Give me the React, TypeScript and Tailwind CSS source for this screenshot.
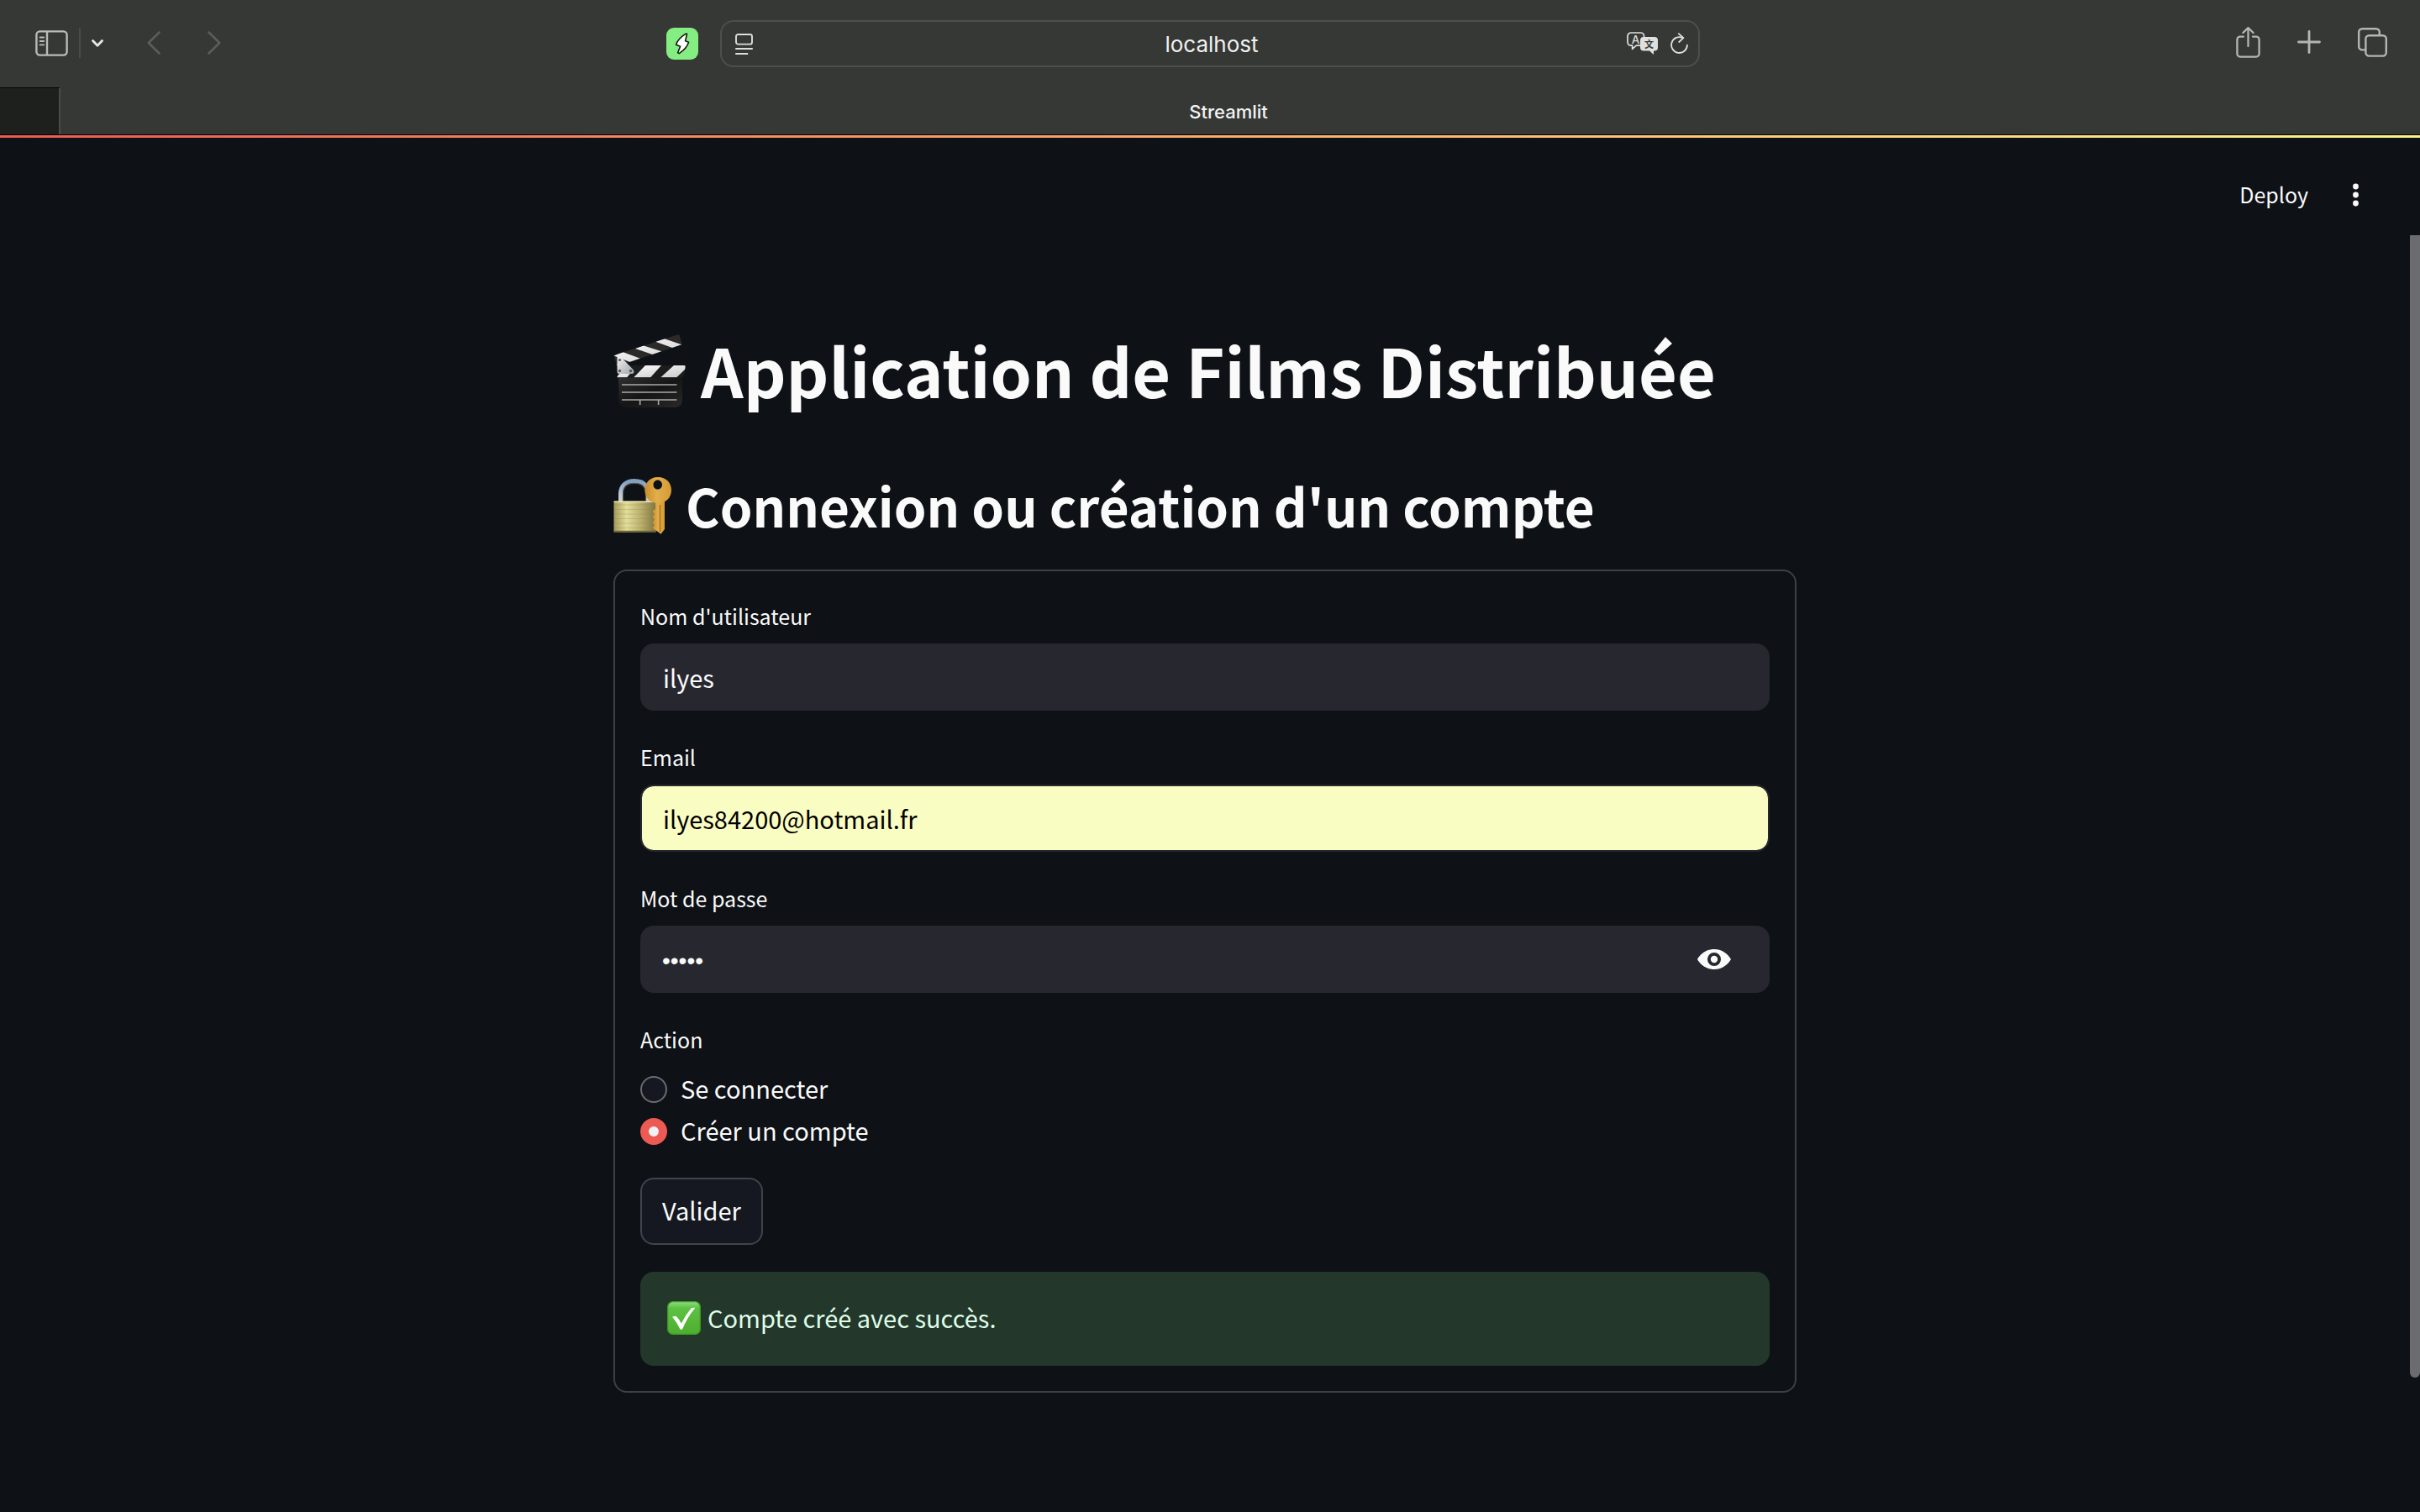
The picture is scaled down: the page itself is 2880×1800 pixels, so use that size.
import { useState } from "react";
import type { ReactNode } from "react";

const inputClass =
  "h-20 w-full rounded-2xl border-2 px-[25px] text-[29px] outline-none";

function IconButton({ label, className, children }: { label: string; className?: string; children: ReactNode }) {
  return (
    <button type="button" aria-label={label} className={`flex shrink-0 items-center justify-center ${className ?? ""}`}>
      {children}
    </button>
  );
}

function SidebarIcon() {
  return (
    <svg width="39" height="31" viewBox="0 0 39 31" fill="none" stroke="#b9bbb9" strokeWidth="2.4">
      <rect x="1.4" y="1.4" width="36.2" height="28.2" rx="4" />
      <path d="M14 1.5v28" />
      <path d="M5.6 8.5h4.6M5.6 13h4.6M5.6 17.4h4.6" strokeWidth="1.8" strokeLinecap="round" />
    </svg>
  );
}

function BoltBadge() {
  return (
    <svg width="38" height="38" viewBox="0 0 38 38">
      <rect width="38" height="38" rx="9" fill="#84ee82" />
      <path
        d="M24.6 7.4 22.6 15.8 26.6 17.2Q24 25 15.2 30.6L13.6 29.8 16.6 22.2 11.6 20.2Q13.6 13.4 22.8 7.4Z"
        fill="#fff"
        stroke="#14180f"
        strokeWidth="1.6"
        strokeLinejoin="round"
      />
    </svg>
  );
}

function ReaderIcon() {
  return (
    <svg width="21" height="25" viewBox="0 0 21 25" fill="none" stroke="#dcdedc" strokeWidth="1.9">
      <rect x="1" y="1" width="19" height="11.6" rx="2.4" />
      <path d="M.2 18h20.6M.2 24h15" />
    </svg>
  );
}

function TranslateIcon() {
  return (
    <svg width="38" height="28" viewBox="0 0 38 28">
      <path
        d="M16 16.2H11.4L6.6 20.4V16.2H5A4 4 0 0 1 1 12.2V5A4 4 0 0 1 5 1H16.5A4 4 0 0 1 20.5 5V6"
        fill="none"
        stroke="#dedfde"
        strokeWidth="1.7"
        strokeLinejoin="round"
      />
      <text x="10.6" y="13.6" textAnchor="middle" fontSize="13.5" fontWeight="500" fontFamily="Inter, sans-serif" fill="#dedfde">
        A
      </text>
      <path d="M20 6H33A4 4 0 0 1 37 10V18.6A4 4 0 0 1 33 22.6H32V27L27 22.6H20A4 4 0 0 1 16 18.6V10A4 4 0 0 1 20 6Z" fill="#dedfde" />
      <text x="26.5" y="18.6" textAnchor="middle" fontSize="11" fontWeight="700" fontFamily="Noto Sans CJK SC, sans-serif" fill="#363836">
        文
      </text>
    </svg>
  );
}

function ReloadIcon() {
  return (
    <svg width="21" height="26" viewBox="0 0 21 26" fill="none" stroke="#dedfde" strokeWidth="1.8" strokeLinecap="round" strokeLinejoin="round">
      <path d="M19.9 14.6A9.4 9.4 0 1 1 14.6 6.1" />
      <path d="M9.8 1.2 15.4 6.2 10.2 11" />
    </svg>
  );
}

function ShareIcon() {
  return (
    <svg width="29" height="37" viewBox="0 0 29 37" fill="none" stroke="#b4b6b4" strokeWidth="2.3" strokeLinecap="round" strokeLinejoin="round">
      <path d="M9 11.6H5A3.6 3.6 0 0 0 1.4 15.2V32A3.6 3.6 0 0 0 5 35.6H24A3.6 3.6 0 0 0 27.6 32V15.2A3.6 3.6 0 0 0 24 11.6H20" />
      <path d="M14.5 23V1.6M8.4 7 14.5 1.2 20.6 7" />
    </svg>
  );
}

function PlusIcon() {
  return (
    <svg width="28" height="28" viewBox="0 0 28 28" fill="none" stroke="#b4b6b4" strokeWidth="2.8" strokeLinecap="round">
      <path d="M14 1.5V26.5M1.5 14H26.5" />
    </svg>
  );
}

function TabsIcon() {
  return (
    <svg width="35" height="35" viewBox="0 0 35 35" fill="none" stroke="#b4b6b4" strokeWidth="2.4">
      <rect x="9.4" y="9.2" width="24.4" height="24.4" rx="4" />
      <path d="M9 26.4H5.2A4 4 0 0 1 1.2 22.4V5.2A4 4 0 0 1 5.2 1.2H21.8A4 4 0 0 1 25.8 5.2V9" />
    </svg>
  );
}

function ClapperEmoji() {
  return (
    <svg role="img" aria-label="Clap de cinéma" className="mt-1 shrink-0" width="86" height="88" viewBox="0 0 86 88">
      <defs>
        <linearGradient id="clapBody" x1="0" y1="0" x2="1" y2="1">
          <stop offset="0" stopColor="#2f2f2f" />
          <stop offset=".5" stopColor="#151515" />
          <stop offset="1" stopColor="#2b2928" />
        </linearGradient>
        <linearGradient id="clapStripe" x1="0" y1="0" x2="1" y2="1">
          <stop offset="0" stopColor="#fff" />
          <stop offset="1" stopColor="#c9c9c9" />
        </linearGradient>
        <linearGradient id="clapHinge" x1="0" y1="0" x2="1" y2="1">
          <stop offset="0" stopColor="#f2f3f4" />
          <stop offset="1" stopColor="#9fa3a6" />
        </linearGradient>
        <clipPath id="clapArm">
          <path d="M.5 25 76 .4Q78.500 0 79 2L81.700 12 13 35 4 37Z" />
        </clipPath>
        <clipPath id="clapBar">
          <path d="M5 37H84Q86 37 85.600 39L84 50 82 51.600H4.600Z" />
        </clipPath>
      </defs>
      <g clipPath="url(#clapArm)">
        <rect width="86" height="40" fill="#2b2a29" />
        <path d="M50 8.800 60 5 82 12.500 73 17ZM26 17 36 13.400 58 20.500 48 24.500ZM.5 25.500 11 21 32 28.800 21 33.500ZM0 34 6 37 0 38Z" fill="url(#clapStripe)" />
      </g>
      <g clipPath="url(#clapBar)">
        <rect y="36" width="86" height="16" fill="#1d1c1c" />
        <path d="M38 37H57L44 51.600H24ZM72 37H90L75 51.600H56ZM10 44H22L16 51.600H3Z" fill="url(#clapStripe)" />
      </g>
      <path d="M6 51.600H82V78Q82 87 72 87H16Q6.500 87 6.500 78Z" fill="url(#clapBody)" />
      <path d="M10 60H75.500M10 69H75.500M10 78H75.500M31.700 78V84M53.600 78V84" stroke="#a9a9a9" strokeWidth="1.600" fill="none" />
      <path d="M4.500 27.500Q7 25.500 10 28L23.500 42Q26 46 22.500 47H7Q4.500 47 4.500 44Z" fill="url(#clapHinge)" />
      <g fill="#55585a">
        <circle cx="7.500" cy="30.500" r="1.600" />
        <circle cx="7.500" cy="43.500" r="1.700" />
        <circle cx="20.600" cy="43.500" r="1.700" />
      </g>
    </svg>
  );
}

function LockEmoji() {
  return (
    <svg role="img" aria-label="Cadenas avec clé" className="mt-1 shrink-0" width="70" height="70" viewBox="0 0 70 70">
      <defs>
        <linearGradient id="lockBody" x1="0" x2="1">
          <stop offset="0" stopColor="#a39a5b" />
          <stop offset=".3" stopColor="#e3dd9b" />
          <stop offset=".65" stopColor="#b9ae6c" />
          <stop offset="1" stopColor="#7d733f" />
        </linearGradient>
        <linearGradient id="lockShackle" x1="0" y1="0" x2="0" y2="1">
          <stop offset="0" stopColor="#7f9fc4" />
          <stop offset=".6" stopColor="#b8c8d8" />
          <stop offset="1" stopColor="#cfd2d4" />
        </linearGradient>
        <linearGradient id="lockKey" x1="0" x2="1">
          <stop offset="0" stopColor="#c98f2c" />
          <stop offset=".45" stopColor="#e3ae4c" />
          <stop offset="1" stopColor="#d59a33" />
        </linearGradient>
      </defs>
      <path d="M8.500 30V20C8.500 9 16 4.400 25 4.400S41.500 9 41.500 20V30" fill="none" stroke="url(#lockShackle)" strokeWidth="5" />
      <path d="M11.500 30V20C11.500 11.500 17 7.400 25 7.400S38.500 11.500 38.500 20V30" fill="none" stroke="#5d5642" strokeWidth="1.200" />
      <rect x=".5" y="28.500" width="50.500" height="37" rx="1" fill="url(#lockBody)" />
      <path d="M1 33H50M1 38.500H50M1 44H50M1 49.500H50M1 55H50M1 60.500H50" stroke="#8f8548" strokeOpacity=".3" strokeWidth="1" />
      <path d="M.5 29.300H51" stroke="#f4efbe" strokeWidth="1.200" />
      <path d="M.5 64.600H51" stroke="#6f6636" strokeWidth="1.800" />
      <path d="M50 28H61V62L56.500 67.800 51.500 64 50 63 46.500 60.500 49 57 46.500 54 49 50.500 46.500 47.500 49 44 46.500 41 50 38Z" fill="url(#lockKey)" />
      <path d="M55.500 33V65" stroke="#a06f1d" strokeWidth="1.300" />
      <path
        fillRule="evenodd"
        d="M53 0C63 0 69 7 69 15.500S63 31 53 31 37.500 24 37.500 15.500 43 0 53 0ZM52.700 3.400C49.600 3.400 47.500 6 47.500 9S49.600 14.600 52.700 14.600 58 12 58 9 55.800 3.400 52.700 3.400Z"
        fill="url(#lockKey)"
      />
    </svg>
  );
}

function CheckEmoji() {
  return (
    <svg role="img" aria-label="Succès" className="shrink-0" width="40" height="40" viewBox="0 0 40 40">
      <defs>
        <linearGradient id="checkFill" x1="0" y1="0" x2="0" y2="1">
          <stop offset="0" stopColor="#8fdc7c" />
          <stop offset=".2" stopColor="#5cc243" />
          <stop offset="1" stopColor="#4ead2f" />
        </linearGradient>
      </defs>
      <rect x=".7" y=".7" width="38.600" height="38.600" rx="6" fill="url(#checkFill)" stroke="#3f9a27" strokeWidth="1.300" />
      <path d="M6 18.500 10.500 17.800Q14 21 16.800 26.500 22 16 29 8L33.500 7.800Q24 19 18 33.600L15.600 33.800Q11.500 25 6 18.500Z" fill="#fff" />
    </svg>
  );
}

function EyeIcon() {
  return (
    <svg width="40" height="24" viewBox="0 0 40 24">
      <path
        fillRule="evenodd"
        d="M20 0C30 0 37 6.500 40 12 37 17.500 30 24 20 24S3 17.500 0 12C3 6.500 10 0 20 0ZM20 4A8 8 0 1 0 20 20 8 8 0 0 0 20 4Z"
        fill="#fafafa"
      />
      <circle cx="20" cy="12" r="4.200" fill="#fafafa" />
    </svg>
  );
}

function BrowserToolbar() {
  return (
    <div className="grid h-[104px] grid-cols-[1fr_minmax(0,1166px)_1fr] items-center">
      <div className="flex items-center justify-between pr-[26px] pl-[42px]">
        <div className="flex items-center pb-[2px]">
          <IconButton label="Afficher la barre latérale">
            <SidebarIcon />
          </IconButton>
          <div className="mx-[13px] h-9 w-[2px] bg-[#494b49]" />
          <IconButton label="Groupes d’onglets">
            <svg width="14" height="9" viewBox="0 0 14 9" fill="none" stroke="#e6e7e6" strokeWidth="2.800" strokeLinecap="round" strokeLinejoin="round">
              <path d="M1.500 1.500 7 7.300 12.500 1.500" />
            </svg>
          </IconButton>
          <IconButton label="Page précédente" className="ml-[52px]">
            <svg width="16" height="28" viewBox="0 0 16 28" fill="none" stroke="#5b5d5b" strokeWidth="2.600" strokeLinecap="round" strokeLinejoin="round">
              <path d="M14.500 1.500 1.800 14 14.500 26.500" />
            </svg>
          </IconButton>
          <IconButton label="Page suivante" className="ml-14">
            <svg width="16" height="28" viewBox="0 0 16 28" fill="none" stroke="#5b5d5b" strokeWidth="2.600" strokeLinecap="round" strokeLinejoin="round">
              <path d="M1.500 1.500 14.200 14 1.500 26.500" />
            </svg>
          </IconButton>
        </div>
        <IconButton label="Extension">
          <BoltBadge />
        </IconButton>
      </div>
      <div className="flex h-14 items-center rounded-2xl border-2 border-[#4d4f4d] pr-3 pl-4">
        <div className="flex w-20 items-center">
          <IconButton label="Lecteur">
            <ReaderIcon />
          </IconButton>
        </div>
        <input
          aria-label="Adresse"
          defaultValue="localhost"
          className="min-w-0 flex-1 bg-transparent text-center font-['Inter',sans-serif] text-[26px] text-[#f0f1f0] outline-none"
        />
        <div className="flex w-20 items-center justify-end gap-[14px]">
          <IconButton label="Traduire">
            <TranslateIcon />
          </IconButton>
          <IconButton label="Recharger">
            <ReloadIcon />
          </IconButton>
        </div>
      </div>
      <div className="flex items-center justify-end gap-11 pr-[39px] pb-1">
        <IconButton label="Partager">
          <ShareIcon />
        </IconButton>
        <IconButton label="Nouvel onglet">
          <PlusIcon />
        </IconButton>
        <IconButton label="Vue des onglets">
          <TabsIcon />
        </IconButton>
      </div>
    </div>
  );
}

function Field({ id, label, children }: { id: string; label: string; children: ReactNode }) {
  return (
    <div className="mb-8">
      <label htmlFor={id} className="mb-[10px] block w-fit text-[25px] leading-[46px]">
        {label}
      </label>
      {children}
    </div>
  );
}

export default function App() {
  const [action, setAction] = useState("Créer un compte");
  const [visible, setVisible] = useState(false);

  return (
    <div className="flex min-h-screen flex-col bg-[#0e1116] font-['Noto_Sans_CJK_SC',sans-serif] text-[#fafafa]">
      <header className="bg-[#363836]">
        <BrowserToolbar />
        <div className="flex h-14 font-['Inter',sans-serif]">
          <div className="w-[72px] border-t border-r-2 border-t-black border-r-[#4a4c4a] bg-[#1e201e]" />
          <div className="flex flex-1 items-center justify-center pt-[2px] pr-7 text-[22px] font-medium text-[#f2f3f2]">Streamlit</div>
        </div>
        <div className="h-1 border-t border-black bg-linear-to-r from-[#ec5a53] to-[#fcf58a]" />
      </header>

      <div className="flex h-[116px] items-center justify-end gap-[53px] pt-5 pr-[73px]">
        <button type="button" className="pb-[2px] text-[25px] leading-10">
          Deploy
        </button>
        <IconButton label="Menu principal">
          <svg width="7" height="28" viewBox="0 0 7 28" fill="#fafafa">
            <circle cx="3.500" cy="4" r="3.400" />
            <circle cx="3.500" cy="14" r="3.400" />
            <circle cx="3.500" cy="24" r="3.400" />
          </svg>
        </IconButton>
      </div>

      <div className="flex flex-1">
        <main className="flex-1 pt-[107px]">
          <div className="mx-auto w-full max-w-[1408px]">
            <h1 className="mb-16 flex items-center gap-[18px] text-[79px] leading-[106px] font-bold">
              <ClapperEmoji />
              Application de Films Distribuée
            </h1>
            <h2 className="mb-[33px] flex items-center gap-4 text-[62px] leading-[88px] font-semibold">
              <LockEmoji />
              Connexion ou création d'un compte
            </h2>
            <form className="rounded-2xl border-2 border-[#3d4045] p-[30px]" onSubmit={(e) => e.preventDefault()}>
              <Field id="username" label="Nom d'utilisateur">
                <input id="username" type="text" defaultValue="ilyes" className={`${inputClass} border-[#272730] bg-[#272730]`} />
              </Field>
              <Field id="email" label="Email">
                <input
                  id="email"
                  type="email"
                  defaultValue="ilyes84200@hotmail.fr"
                  className={`${inputClass} border-[#272730] bg-[#fafdc2] bg-clip-padding text-black`}
                />
              </Field>
              <Field id="password" label="Mot de passe">
                <div className="flex h-20 items-center rounded-2xl bg-[#272730] pr-[46px] pl-[26px]">
                  <input
                    id="password"
                    type={visible ? "text" : "password"}
                    defaultValue="ilyes"
                    className={
                      visible
                        ? "h-full min-w-0 flex-1 bg-transparent text-[29px] outline-none"
                        : "h-full min-w-0 flex-1 bg-transparent pt-1 font-['Liberation_Sans',sans-serif] text-[28px] outline-none"
                    }
                  />
                  <button type="button" aria-label="Afficher le mot de passe" onClick={() => setVisible(!visible)}>
                    <EyeIcon />
                  </button>
                </div>
              </Field>
              <fieldset className="mb-8">
                <legend className="mb-[10px] text-[25px] leading-[46px]">Action</legend>
                {["Se connecter", "Créer un compte"].map((option) => (
                  <label key={option} className="flex w-fit items-center gap-4 text-[29px] leading-[50px]">
                    <input
                      type="radio"
                      name="action"
                      checked={action === option}
                      onChange={() => setAction(option)}
                      className="mt-1 size-8 appearance-none rounded-full border-2 border-[#6a6c70] bg-[#151821] checked:border-[10px] checked:border-[#ec5a53] checked:bg-[#f0f2f6]"
                    />
                    {option}
                  </label>
                ))}
              </fieldset>
              <button
                type="submit"
                className="mb-8 flex h-20 items-center rounded-2xl border-2 border-[#41444c] bg-[#151821] px-6 pb-[2px] text-[29px]"
              >
                Valider
              </button>
              <div role="status" className="flex h-28 items-center gap-2 rounded-2xl bg-[#23372b] px-8 pb-[2px] text-[29px] text-[#dffde9]">
                <CheckEmoji />
                Compte créé avec succès.
              </div>
            </form>
          </div>
        </main>
        <div className="flex w-3 flex-col">
          <div className="flex-[17] rounded-b-full bg-[#6b6c70]" />
          <div className="flex-[2]" />
        </div>
      </div>
    </div>
  );
}
